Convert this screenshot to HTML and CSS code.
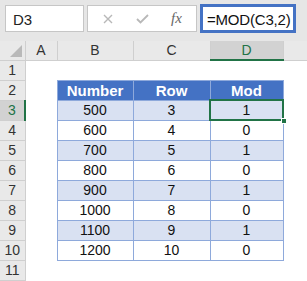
FILE: index.html
```html
<!DOCTYPE html>
<html lang="en">
<head>
  <meta charset="UTF-8">
  <title>MOD example</title>
  <link rel="stylesheet" href="styles.css">
</head>
<body>

<!-- Formula bar -->
<div class="formula-bar">
  <div class="name-box">D3</div>
  <div class="func-box">
    <svg class="icon cancel" width="10" height="10" viewBox="0 0 10 10">
      <path d="M1 1 L9 9 M9 1 L1 9" stroke="#b8b8b8" stroke-width="1.4" fill="none"/>
    </svg>
    <svg class="icon enter" width="13" height="10" viewBox="0 0 13 10">
      <path d="M1 5 L4.5 8.5 L12 1" stroke="#b8b8b8" stroke-width="1.8" fill="none"/>
    </svg>
    <span class="fx">fx</span>
  </div>
  <div class="formula">=MOD(C3,2)</div>
</div>

<!-- Sheet -->
<table class="sheet">
  <colgroup>
    <col class="c-rh"><col class="c-a"><col class="c-b"><col class="c-c"><col class="c-d"><col class="c-e">
  </colgroup>
  <tr class="col-heads">
    <th class="corner"><span class="tri"></span></th>
    <th>A</th><th>B</th><th>C</th><th class="sel">D</th><th></th>
  </tr>
  <tr><th class="rh">1</th><td></td><td></td><td></td><td></td><td></td></tr>
  <tr><th class="rh">2</th><td></td><td class="t-head">Number</td><td class="t-head">Row</td><td class="t-head">Mod</td><td></td></tr>
  <tr class="band"><th class="rh sel">3</th><td></td><td class="t">500</td><td class="t">3</td><td class="t active">1<span class="handle"></span></td><td></td></tr>
  <tr><th class="rh">4</th><td></td><td class="t">600</td><td class="t">4</td><td class="t">0</td><td></td></tr>
  <tr class="band"><th class="rh">5</th><td></td><td class="t">700</td><td class="t">5</td><td class="t">1</td><td></td></tr>
  <tr><th class="rh">6</th><td></td><td class="t">800</td><td class="t">6</td><td class="t">0</td><td></td></tr>
  <tr class="band"><th class="rh">7</th><td></td><td class="t">900</td><td class="t">7</td><td class="t">1</td><td></td></tr>
  <tr><th class="rh">8</th><td></td><td class="t">1000</td><td class="t">8</td><td class="t">0</td><td></td></tr>
  <tr class="band"><th class="rh">9</th><td></td><td class="t">1100</td><td class="t">9</td><td class="t">1</td><td></td></tr>
  <tr><th class="rh">10</th><td></td><td class="t">1200</td><td class="t">10</td><td class="t">0</td><td></td></tr>
  <tr><th class="rh">11</th><td></td><td></td><td></td><td></td><td></td></tr>
</table>

</body>
</html>
```

FILE: styles.css
```css
* {
  box-sizing: border-box;
}

body {
  margin: 0;
  font-family: "Liberation Sans", Arial, sans-serif;
  background: #fff;
  overflow: hidden;
}

/* Formula bar */
.formula-bar {
  display: flex;
  align-items: flex-start;
  height: 41px;
  padding: 4px 0 0 5px;
  background: #e6e6e6;
}

.name-box {
  width: 79px;
  height: 27px;
  margin-top: 1px;
  padding: 5px 0 0 7px;
  background: #fff;
  border: 1px solid #c6c6c6;
  font-size: 15px;
  color: #222;
}

.func-box {
  display: flex;
  align-items: center;
  width: 110px;
  height: 27px;
  margin: 1px 0 0 3px;
  background: #fff;
  border: 1px solid #c6c6c6;
}

.cancel {
  margin-left: 15px;
}

.enter {
  margin-left: 23px;
}

.fx {
  margin-left: 22px;
  font-family: "Liberation Serif", serif;
  font-style: italic;
  font-size: 15px;
  color: #666;
}

.formula {
  width: 96px;
  height: 29px;
  margin-left: 3px;
  padding: 4px 0 0 4px;
  background: #fff;
  border: 3px solid #4472c4;
  font-size: 15px;
  letter-spacing: -0.2px;
  color: #111;
  white-space: nowrap;
  overflow: hidden;
}

/* Sheet grid */
.sheet {
  border-collapse: collapse;
  table-layout: fixed;
  width: 307px;
  font-size: 14px;
}

.c-rh { width: 25px; }
.c-a { width: 32px; }
.c-b { width: 76px; }
.c-c { width: 77px; }
.c-d { width: 73px; }
.c-e { width: 24px; }

.sheet tr {
  height: 20px;
}

.sheet .col-heads {
  height: 19px;
}

.sheet th {
  padding: 0;
  font-weight: normal;
  color: #333;
  background: #e9e9e9;
  border-right: 1px solid #cfcfcf;
  border-bottom: 1px solid #cfcfcf;
  text-align: center;
}

.sheet td {
  padding: 0;
  text-align: center;
}

.corner {
  position: relative;
}

.tri {
  position: absolute;
  right: 3px;
  bottom: 3px;
  width: 0;
  height: 0;
  border-left: 12px solid transparent;
  border-bottom: 12px solid #b9b9b9;
}

.col-heads .sel {
  background: #d2d2d2;
  color: #217346;
  border-bottom: 2px solid #217346;
}

.rh.sel {
  background: #d2d2d2;
  color: #217346;
  border-right: 2px solid #217346;
}

/* Data table */
.t-head {
  background: #4472c4;
  color: #fff;
  font-weight: bold;
  font-size: 15px;
  border: 1px solid #8ea9db;
}

.t {
  border: 1px solid #8ea9db;
  color: #111;
}

.band .t {
  background: #d9e1f2;
}

.t.active {
  position: relative;
  outline: 2px solid #217346;
  outline-offset: -1px;
}

.handle {
  position: absolute;
  right: -4px;
  bottom: -4px;
  width: 6px;
  height: 6px;
  background: #217346;
  border: 1px solid #fff;
}
```
